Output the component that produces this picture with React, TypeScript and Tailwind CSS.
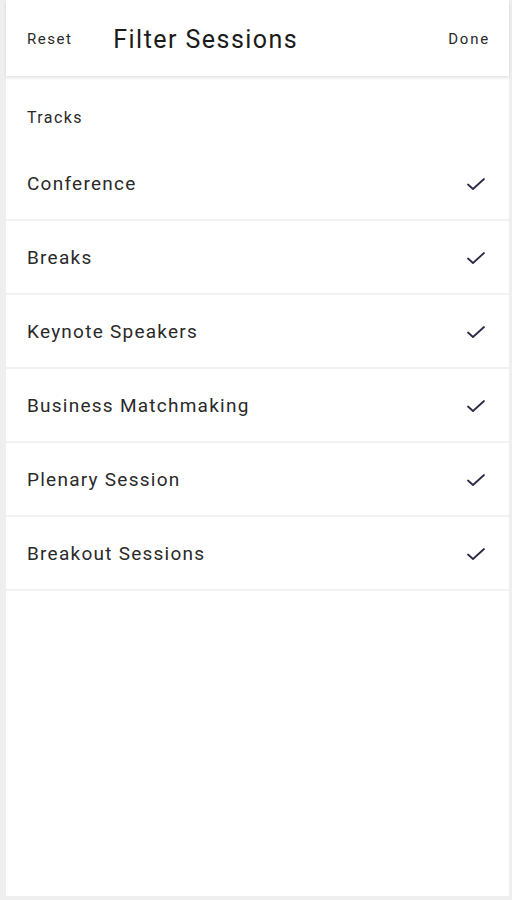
import React from "react";

const tracks = [
  "Conference",
  "Breaks",
  "Keynote Speakers",
  "Business Matchmaking",
  "Plenary Session",
  "Breakout Sessions",
];

function Check() {
  return (
    <svg width="20" height="16" viewBox="0 0 20 16" fill="none">
      <path d="M2 8.5 L7 13 L18 3" stroke="#2b2b45" strokeWidth="1.8" strokeLinecap="round" strokeLinejoin="round" />
    </svg>
  );
}

export default function App() {
  return (
    <div
      className="w-[512px] h-[900px] bg-[#efefef] pl-[6px] pr-[3px] pb-[4px] flex flex-col"
      style={{ fontFamily: "Roboto, 'Noto Sans', sans-serif" }}
    >
      <div className="flex-1 bg-white flex flex-col">
        <div className="h-[76px] flex items-center px-[21px] shadow-[0_2px_3px_rgba(0,0,0,0.12)] relative z-10">
          <span className="text-[15px] text-[#2a2a2a] tracking-[1.5px] pt-[2px]">Reset</span>
          <span className="ml-[41px] text-[25px] text-[#1a1a1a] tracking-[1.45px] pt-[4px]">Filter Sessions</span>
          <span className="ml-auto text-[15px] text-[#2a2a2a] tracking-[1.8px] pt-[2px] mr-[-2px]">Done</span>
        </div>
        <div className="pt-[32px] pb-[20px] px-[21px] text-[16px] leading-[19px] text-[#2a2a2a] tracking-[1.4px]">Tracks</div>
        {tracks.map((t) => (
          <div key={t} className="h-[74px] border-b-2 border-[#f2f2f2] flex items-center px-[21px]">
            <span className="text-[19px] text-[#2a2a2a] tracking-[1.25px] pt-[3px]">{t}</span>
            <span className="ml-auto mr-[2px] pt-[2px]">
              <Check />
            </span>
          </div>
        ))}
      </div>
    </div>
  );
}
